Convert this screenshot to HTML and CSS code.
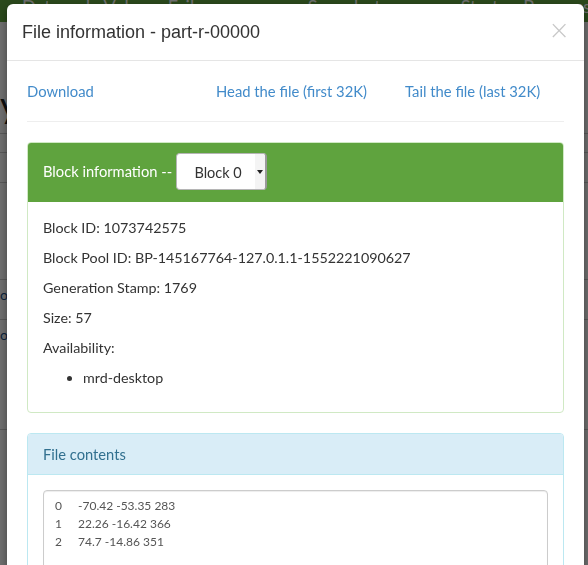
FILE: index.html
```html
<!DOCTYPE html>
<html>
<head>
<meta charset="utf-8">
<title>File information</title>
<link rel="stylesheet" href="styles.css">
</head>
<body>
<div class="page">
  <div class="navbar">
    <span>Datanode Volume Failures</span>
    <span>Snapshot</span>
    <span>Startup Progress</span>
    <span>Utilities ▾</span>
  </div>
  <div class="bg-content">
    <div class="bg-title">y</div>
    <div class="bg-row r1"></div>
    <div class="bg-row r2"></div>
    <div class="bg-row r3"></div>
    <div class="bg-row r4"><span class="bg-link">o</span></div>
    <div class="bg-row r5"><span class="bg-link">o</span></div>
    <div class="bg-row r6"></div>
  </div>
</div>
<div class="backdrop"></div>
<div class="modal">
  <div class="modal-header">
    <h4 class="modal-title">File information - part-r-00000</h4>
    <span class="close">×</span>
  </div>
  <div class="modal-body">
    <div class="row">
      <div class="col"><a href="#">Download</a></div>
      <div class="col"><a href="#">Head the file (first 32K)</a></div>
      <div class="col"><a href="#">Tail the file (last 32K)</a></div>
    </div>
    <hr>
    <div class="panel panel-success">
      <div class="panel-heading">
        <span>Block information --</span>
        <div class="select"><span class="select-text">Block 0</span><span class="select-arrow"></span></div>
      </div>
      <div class="panel-body">
        <p>Block ID: 1073742575</p>
        <p>Block Pool ID: BP-145167764-127.0.1.1-1552221090627</p>
        <p>Generation Stamp: 1769</p>
        <p>Size: 57</p>
        <p>Availability:</p>
        <ul><li>mrd-desktop</li></ul>
      </div>
    </div>
    <div class="panel panel-info">
      <div class="panel-heading">File contents</div>
      <div class="panel-body">
        <textarea class="contents" readonly rows="8">0	-70.42 -53.35 283
1	22.26 -16.42 366
2	74.7 -14.86 351</textarea>
      </div>
    </div>
  </div>
</div>
</body>
</html>
```

FILE: styles.css
```css
* { box-sizing: border-box; }
html, body { margin: 0; height: 100%; overflow: hidden; }
body {
  font-family: "Source Sans Pro", Lato, "Open Sans", sans-serif;
  font-size: 14.3px;
  line-height: 20px;
  color: #333;
  background: #fff;
}
.page { position: relative; }
.navbar {
  height: 22px;
  background: #63a840;
  color: #fff;
  display: flex;
  gap: 80px;
  padding-left: 22px;
  font-size: 18px;
  line-height: 12px;
  overflow: hidden;
  white-space: nowrap;
}
.bg-title { font-size: 36px; line-height: 40px; height: 110px; padding-top: 62px; color: #222; }
.bg-row { border-top: 1px solid #ccc; }
.r1 { height: 19px; margin-top: 1px; }
.r2 { height: 30px; }
.r3 { height: 97px; }
.r4 { height: 40px; }
.r5 { height: 110px; }
.r6 { height: 100px; }
.bg-link { color: #1a4f8a; font-size: 14px; display: block; padding-top: 5px; }
.backdrop {
  position: fixed;
  inset: 0;
  background: rgba(0, 0, 0, 0.565);
}
.modal {
  position: absolute;
  left: 7px;
  top: 4px;
  width: 577px;
  height: 600px;
  background: #fff;
  border-radius: 6px;
  box-shadow: 0 3px 9px rgba(0,0,0,.4);
}
.modal-header {
  position: relative;
  padding: 15px;
  border-bottom: 1px solid #e5e5e5;
}
.modal-title {
  margin: 0;
  font-family: "Liberation Sans", Arial, sans-serif;
  font-weight: normal;
  font-size: 18px;
  line-height: 26px;
  color: #333;
}
.close {
  position: absolute;
  right: 14px;
  top: 11px;
  font-family: "DejaVu Sans", sans-serif;
  font-weight: 300;
  font-size: 26px;
  line-height: 30px;
  color: #c8c8c8;
}
.modal-body { padding: 20px; }
.row { display: grid; grid-template-columns: 1fr 1fr 1fr; margin: 0 -15px; }
.col { padding: 0 15px; font-size: 14.8px; }
a { color: #428bca; text-decoration: none; }
hr { margin: 20px 0; border: 0; border-top: 1px solid #eee; }
.panel { border: 1px solid; border-radius: 4px; margin-bottom: 20px; }
.panel-heading {
  padding: 10px 15px;
  border-bottom: 1px solid;
  border-radius: 3px 3px 0 0;
  font-size: 14.7px;
}
.panel-success { border-color: #d0e9c4; }
.panel-success .panel-heading {
  background: #5fa33e;
  border-color: #5fa33e;
  color: #fff;
  display: flex;
  align-items: center;
  gap: 4px;
  padding-bottom: 11px;
}
.panel-success .panel-heading > span { margin-top: -2px; }
.panel-success .panel-body { padding: 16px 15px 14px; }
.panel-info { border-color: #bce8f1; }
.panel-info .panel-heading { background: #d9edf7; border-color: #bce8f1; color: #31708f; padding-top: 10px; padding-bottom: 10px; }
.panel-body { padding: 15px; }
p { margin: 0 0 10px; }
ul { margin: 0 0 10px; padding-left: 40px; }
.select {
  display: flex;
  align-items: stretch;
  width: 91px;
  height: 37px;
  background: #fff;
  border-radius: 4px;
  border: 1px solid #b5b5b5;
  border-right: 2px solid #9a9a9a;
  overflow: hidden;
  color: #333;
  font-size: 14.5px;
}
.select-text { flex: 1; text-align: center; line-height: 37px; padding-left: 4px; }
.select-arrow {
  width: 10px;
  background: #f4f4f4;
  position: relative;
}
.select-arrow::after {
  content: "";
  position: absolute;
  left: 2px;
  top: 16px;
  border-left: 3px solid transparent;
  border-right: 3px solid transparent;
  border-top: 4px solid #222;
}
.contents {
  display: block;
  width: 100%;
  height: 200px;
  padding: 6px 11px;
  border: 1px solid #ccc;
  border-radius: 4px;
  font-family: "Source Sans Pro", Lato, "Open Sans", sans-serif;
  font-size: 12px;
  line-height: 18px;
  color: #555;
  resize: none;
  tab-size: 23px;
  -moz-tab-size: 23px;
  box-shadow: inset 0 1px 1px rgba(0,0,0,.075);
}
```
